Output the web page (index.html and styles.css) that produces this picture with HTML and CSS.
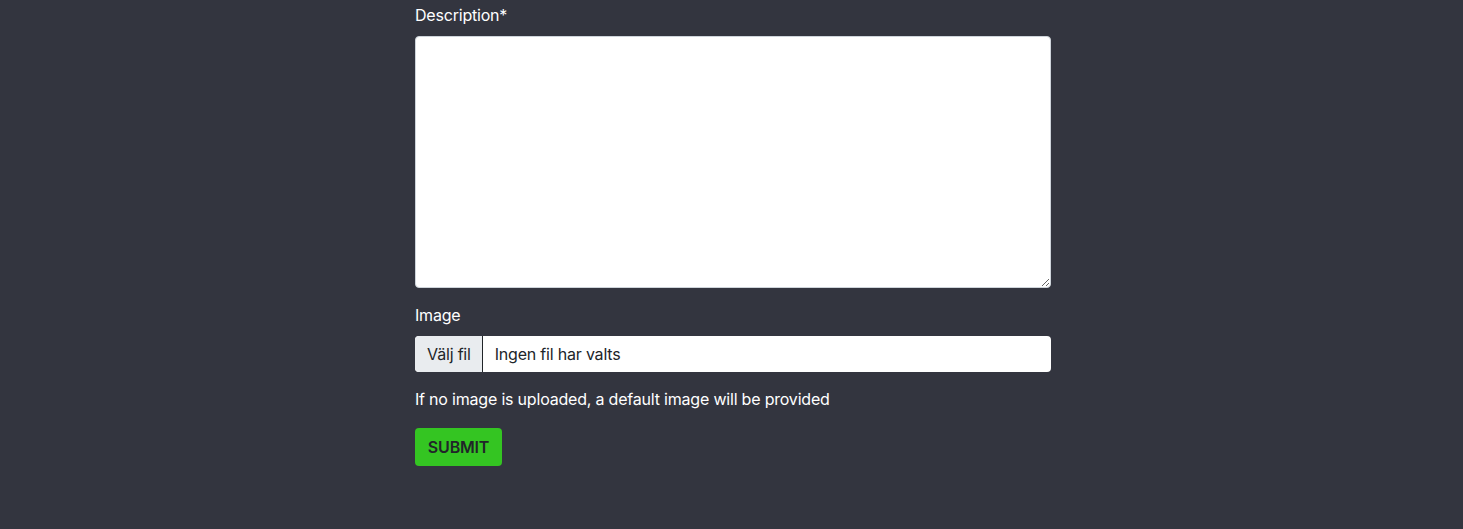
FILE: index.html
```html
<!DOCTYPE html>
<html lang="sv">
<head>
<meta charset="utf-8">
<link rel="stylesheet" href="styles.css">
</head>
<body>
<main class="page">
  <form class="form">
    <label class="label" for="desc">Description*</label>
    <textarea id="desc" class="textarea"></textarea>
    <label class="label label-gap">Image</label>
    <div class="file">
      <span class="file-btn">Välj fil</span>
      <span class="file-name">Ingen fil har valts</span>
    </div>
    <p class="hint">If no image is uploaded, a default image will be provided</p>
    <button type="button" class="submit">SUBMIT</button>
  </form>
</main>
</body>
</html>
```
FILE: styles.css
```css
html, body {
  margin: 0;
  padding: 0;
  background: #33353f;
  height: 100%;
}
body {
  font-family: Inter, "Noto Sans", "Liberation Sans", sans-serif;
  color: #ffffff;
  font-size: 16px;
  line-height: 24px;
  letter-spacing: -0.2px;
}
.page {
  display: flex;
  justify-content: center;
  padding-left: 3px;
  padding-top: 3px;
}
.form {
  width: 636px;
  display: flex;
  flex-direction: column;
  align-items: flex-start;
}
.label {
  display: block;
  margin-bottom: 9px;
  color: #ffffff;
}
.label-gap {
  margin-top: 15px;
}
.textarea {
  box-sizing: border-box;
  width: 636px;
  height: 252px;
  border: 1px solid #ced4da;
  border-radius: 4px;
  background: #ffffff;
  margin: 0;
  display: block;
  font: inherit;
}
.file {
  box-sizing: border-box;
  width: 636px;
  height: 36px;
  background: #ffffff;
  border-radius: 4px;
  display: flex;
  align-items: stretch;
  overflow: hidden;
  color: #212529;
}
.file-btn {
  display: flex;
  align-items: center;
  padding: 0 11px 0 12px;
  background: #e9ecef;
  border-right: 1px solid #212529;
}
.file-name {
  display: flex;
  align-items: center;
  padding-left: 12px;
}
.hint {
  margin: 15px 0 17px;
}
.submit {
  height: 38px;
  width: 87px;
  border: none;
  border-radius: 4px;
  background: #34c522;
  color: #212529;
  font: inherit;
  font-weight: 600;
  letter-spacing: -0.2px;
  padding: 0;
}
```
